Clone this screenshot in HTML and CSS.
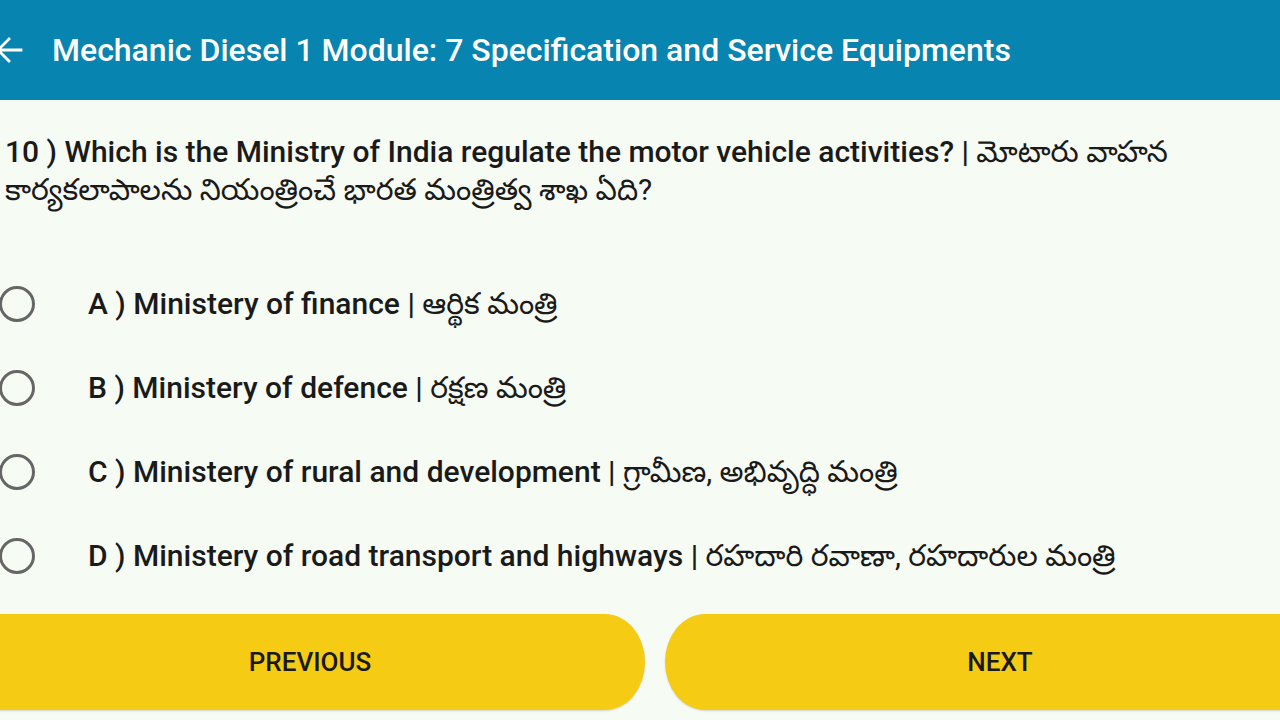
FILE: index.html
```html
<!DOCTYPE html>
<html>
<head>
<meta charset="utf-8">
<link rel="stylesheet" href="styles.css">
</head>
<body>
<header class="appbar">
  <svg class="back" width="30" height="30" viewBox="0 0 30 30"><path d="M24 15H1 M12 4L1 15L12 26" fill="none" stroke="#fff" stroke-width="2.8" stroke-linecap="square"/></svg>
  <h1 class="title">Mechanic Diesel 1 Module: 7 Specification and Service Equipments</h1>
</header>
<main class="content">
  <p class="question">10 ) Which is the Ministry of India regulate the motor vehicle activities? | <span class="te">మోటారు వాహన కార్యకలాపాలను నియంత్రించే భారత మంత్రిత్వ శాఖ ఏది?</span></p>
  <ul class="options">
    <li class="option"><span class="radio"></span><span class="label">A ) Ministery of finance | <span class="te">ఆర్థిక మంత్రి</span></span></li>
    <li class="option"><span class="radio"></span><span class="label">B ) Ministery of defence | <span class="te">రక్షణ మంత్రి</span></span></li>
    <li class="option"><span class="radio"></span><span class="label">C ) Ministery of rural and development | <span class="te">గ్రామీణ, అభివృద్ధి మంత్రి</span></span></li>
    <li class="option"><span class="radio"></span><span class="label">D ) Ministery of road transport and highways | <span class="te">రహదారి రవాణా, రహదారుల మంత్రి</span></span></li>
  </ul>
  <div class="nav">
    <button class="btn btn-prev">PREVIOUS</button>
    <button class="btn btn-next">NEXT</button>
  </div>
</main>
</body>
</html>
```
FILE: styles.css
```css
html, body {
  margin: 0;
  padding: 0;
  width: 1280px;
  height: 720px;
  overflow: hidden;
  background: #f6fbf4;
  font-family: Roboto, "Noto Sans", "Noto Sans Telugu", sans-serif;
  color: #1a1a1a;
}
.appbar {
  height: 100px;
  background: #0784b0;
  display: flex;
  align-items: center;
  box-sizing: border-box;
  padding-left: 0;
}
.back {
  margin-left: -3px;
  margin-right: 25px;
  flex: none;
}
.title {
  margin: 0;
  color: #fff;
  font-size: 32px;
  font-weight: 500;
}
.content {
  display: flex;
  flex-direction: column;
}
.question {
  margin: 33px 0 0 5px;
  width: 1200px;
  font-size: 30px;
  font-weight: 500;
  line-height: 38px;
}
.te {
  font-weight: 400;
}
.options {
  list-style: none;
  margin: 77px 0 0 0;
  padding: 0;
  display: flex;
  flex-direction: column;
  gap: 48px;
}
.option {
  display: flex;
  align-items: center;
  height: 36px;
}
.radio {
  width: 30px;
  height: 30px;
  border: 3px solid #666;
  border-radius: 50%;
  margin-left: -1px;
  margin-right: 53px;
  flex: none;
}
.label {
  font-size: 30px;
  font-weight: 500;
  padding-top: 5px;
}
.nav {
  display: flex;
  gap: 20px;
  margin: 40px 0 0 -25px;
}
.btn {
  flex: none;
  width: 670px;
  height: 96px;
  border: none;
  background: #f5cb13;
  font-family: Roboto, sans-serif;
  font-size: 26px;
  font-weight: 500;
  color: #1a1a1a;
  box-shadow: 0 1px 2px rgba(0,0,0,0.15);
}
.btn-prev {
  border-radius: 0 40px 40px 0 / 0 48px 48px 0;
}
.btn-next {
  border-radius: 40px 0 0 40px / 48px 0 0 48px;
}
```
